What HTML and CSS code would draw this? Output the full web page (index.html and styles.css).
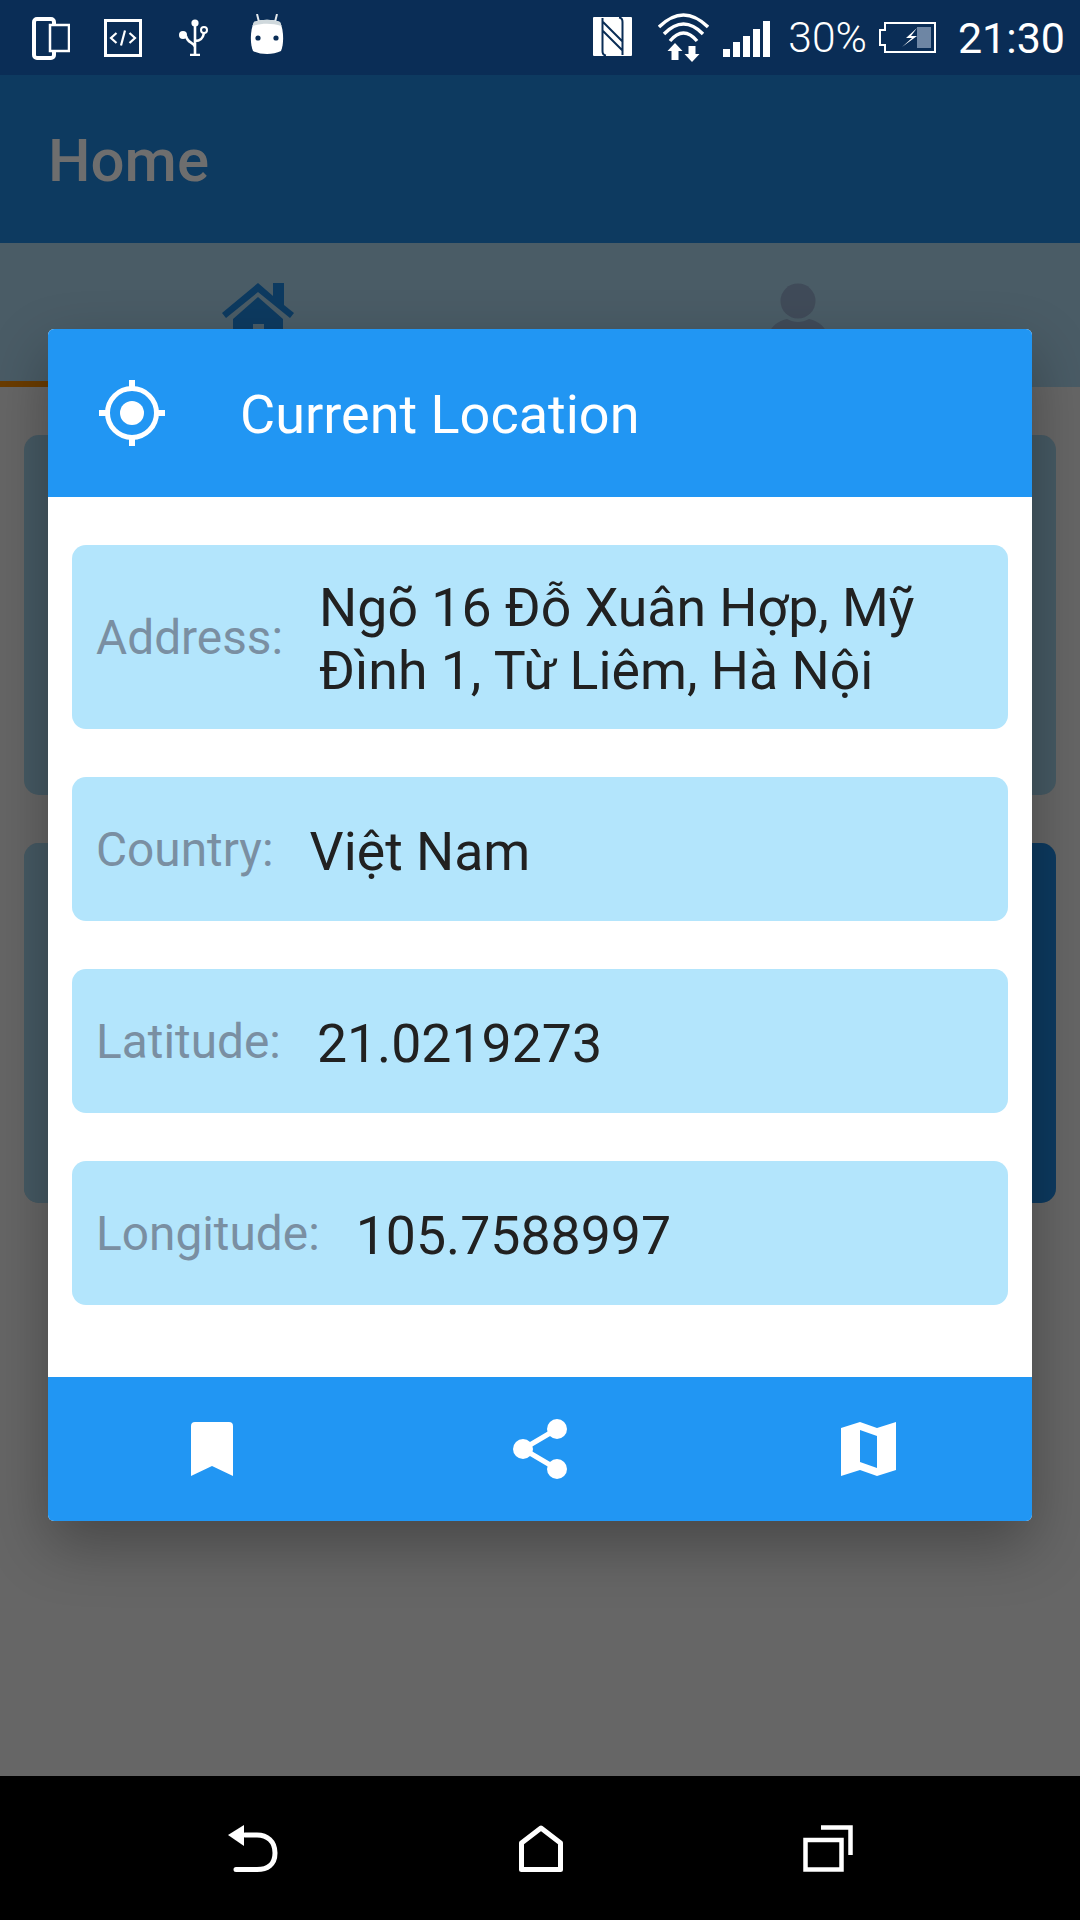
FILE: index.html
```html
<!DOCTYPE html>
<html lang="vi">
<head>
<meta charset="utf-8">
<title>Home</title>
<link rel="stylesheet" href="styles.css">
</head>
<body>
<div class="screen">
  <header class="status">
    <div class="status-left">
      <svg class="ic i-phone" width="38" height="43" viewBox="0 0 38 43"><rect x="2" y="2" width="20" height="39" rx="3" fill="none" stroke="#fff" stroke-width="4"/><rect x="18" y="8" width="19" height="26" fill="#0a2d56" stroke="#fff" stroke-width="2.500"/></svg>
      <svg class="ic i-code" width="38" height="38" viewBox="0 0 38 38"><rect x="1.500" y="1.500" width="35" height="35" fill="none" stroke="#fff" stroke-width="3"/><path d="M12.500 14l-5.500 5 5.500 5M25.500 14l5.500 5-5.500 5M21 11.500l-4 15" fill="none" stroke="#fff" stroke-width="2.200"/></svg>
      <svg class="ic i-usb" width="30" height="37" viewBox="0 0 30 37"><path d="M16 4v32M11 36h10M16 28c-1-5-8-4-9-11M16 22c6 0 8-3 9-8" fill="none" stroke="#fff" stroke-width="2.600"/><circle cx="16" cy="4" r="3.600" fill="#fff"/><circle cx="4" cy="16" r="4" fill="#fff"/><circle cx="25" cy="11" r="3" fill="none" stroke="#fff" stroke-width="2"/></svg>
      <svg class="ic i-droid" width="34" height="41" viewBox="0 0 34 41"><path d="M7 0l2 8M27 0l-2 8" stroke="#e3e8ec" stroke-width="2"/><path d="M4 8C12 5 22 5 30 8 34 16 34 30 31 37 23 41 11 41 3 37 0 30 0 16 4 8z" fill="#fff"/><path d="M4 8C12 5 22 5 30 8L31.500 12C22 9 12 9 2.500 12z" fill="#cfd8dc"/><circle cx="8" cy="24" r="2.600" fill="#0a2d56"/><circle cx="26" cy="24" r="2.600" fill="#0a2d56"/></svg>
    </div>
    <div class="status-right">
      <svg class="ic i-nfc" width="39" height="39" viewBox="0 0 39 39"><rect width="39" height="39" rx="1" fill="#fff"/><path d="M9.500 1V34Q9.500 38 13 38.500M29.500 38V5Q29.500 1 26 .5M10 5L30 25M10 14L30 34" fill="none" stroke="#0a2d56" stroke-width="2"/></svg>
      <svg class="ic i-wifi" width="51" height="49" viewBox="0 0 51 49"><path d="M1 14Q25.500-10 50 14M6 21Q25.500 1 45 21M12 28Q25.500 12 39 28" fill="none" stroke="#fff" stroke-width="3.400"/><path d="M17 30l-7.500 8H13.500v9h7v-9h4zM34 49l7.500-8H37.500v-8h-7v8h-4z" fill="#fff"/></svg>
      <div class="signal"><i class="b1"></i><i class="b2"></i><i class="b3"></i><i class="b4"></i><i class="b5"></i></div>
      <span class="pct">30%</span>
      <svg class="ic i-batt" width="57" height="31" viewBox="0 0 57 31"><path d="M6 1h50v29H6v-7H1V8h5z" fill="none" stroke="#fff" stroke-width="2"/><rect x="38" y="5" width="14" height="21" fill="#6e86a4"/><path d="M38 6L27 16h6l-10 9 15-11h-6l6-8z" fill="#fff"/></svg>
      <span class="clock">21:30</span>
    </div>
  </header>

  <div class="appbar"><span class="app-title">Home</span></div>
  <div class="tabs">
    <div class="tab tab-on">
      <svg width="72" height="56" viewBox="0 0 72 56"><path d="M0 30L36 0l15 13V0h11v22l10 8-4 5L36 9 4 35z" fill="#0d3a60"/><path fill-rule="evenodd" d="M11 36L36 14l25 22v20H11zM31 41h11v15H31z" fill="#0d3a60"/></svg>
    </div>
    <div class="tab">
      <svg width="56" height="56" viewBox="0 0 56 56"><circle cx="28" cy="18" r="17.500" fill="#404b59"/><path d="M0 48C4 40 12 37 17 36c7 4 15 4 22 0 5 1 13 4 17 12v8H0z" fill="#404b59"/></svg>
    </div>
  </div>
  <main class="back">
    <div class="back-card"></div>
    <div class="back-card split"><div class="half"></div><div class="half half-blue"></div></div>
  </main>

  <nav class="navbar">
    <svg width="52" height="47" viewBox="0 0 52 47"><path d="M18 10H30C40 10 48 16 48 28S40 44.500 30 44.500H9" fill="none" stroke="#fff" stroke-width="5" stroke-linecap="round"/><path d="M17 0v21L1 10z" fill="#fff"/></svg>
    <svg width="44" height="47" viewBox="0 0 44 47"><path d="M22 3L41.500 18V44.500H2.500V18z" fill="none" stroke="#fff" stroke-width="5" stroke-linejoin="round"/></svg>
    <svg width="50" height="47" viewBox="0 0 50 47"><rect x="2.500" y="15" width="36" height="29.500" fill="none" stroke="#fff" stroke-width="4.500"/><path d="M18 2.500H47.500V30" fill="none" stroke="#fff" stroke-width="4.500"/></svg>
  </nav>

  <section class="dialog">
    <div class="dlg-head">
      <svg class="target" width="66" height="66" viewBox="0 0 66 66"><circle cx="33" cy="33" r="24.500" fill="none" stroke="#fff" stroke-width="5"/><circle cx="33" cy="33" r="12" fill="#fff"/><path d="M33 0v10M33 56v10M0 33h10M56 33h10" stroke="#fff" stroke-width="6"/></svg>
      <h1 class="dlg-title">Current Location</h1>
    </div>
    <div class="dlg-body">
      <div class="row"><span class="label">Address:</span><span class="value">Ngõ 16 Đỗ Xuân Hợp, Mỹ Đình 1, Từ Liêm, Hà Nội</span></div>
      <div class="row"><span class="label">Country:</span><span class="value">Việt Nam</span></div>
      <div class="row"><span class="label">Latitude:</span><span class="value">21.0219273</span></div>
      <div class="row"><span class="label">Longitude:</span><span class="value">105.7588997</span></div>
    </div>
    <div class="dlg-foot">
      <div class="act"><svg width="42" height="54" viewBox="0 0 42 54"><path d="M0 4a4 4 0 0 1 4-4h34a4 4 0 0 1 4 4v50L21 44 0 54z" fill="#fff"/></svg></div>
      <div class="act"><svg width="54" height="60" viewBox="0 0 54 60"><path d="M44 10L10 30l34 20" fill="none" stroke="#fff" stroke-width="5"/><circle cx="44" cy="10" r="10" fill="#fff"/><circle cx="10" cy="30" r="10" fill="#fff"/><circle cx="44" cy="50" r="10" fill="#fff"/></svg></div>
      <div class="act"><svg width="55" height="54" viewBox="0 0 55 54"><path fill-rule="evenodd" d="M0 6L19 0l17 6 19-6v48l-19 6-17-6-19 6zM19 8v32l17 6V14z" fill="#fff"/></svg></div>
    </div>
  </section>
</div>
</body>
</html>
```

FILE: styles.css
```css
* { box-sizing: border-box; }
html, body { margin: 0; padding: 0; }
body { width: 1080px; height: 1920px; overflow: hidden; font-family: Roboto, "Noto Sans", sans-serif; background: #666; }
.screen { position: relative; width: 1080px; height: 1920px; display: flex; flex-direction: column; }

.status { height: 75px; background: #0a2d56; display: flex; justify-content: space-between; align-items: center; padding: 0 15px 0 32px; color: #fff; }
.status-left { display: flex; align-items: center; }
.status-right { display: flex; align-items: center; }
.ic { display: block; }
.i-phone { margin-top: 1px; }
.i-code { margin-left: 34px; }
.i-usb { margin-left: 37px; }
.i-droid { margin-left: 41px; margin-top: -6px; }
.i-nfc { margin-right: 26px; margin-top: -2px; }
.i-wifi { margin-right: 14px; margin-top: 0; }
.signal { display: flex; align-items: flex-end; justify-content: space-between; width: 47px; height: 36px; margin-right: 18px; margin-top: 3px; }
.signal i { display: block; width: 7px; background: #fff; }
.signal .b1 { height: 8px; }
.signal .b2 { height: 15px; }
.signal .b3 { height: 21px; }
.signal .b4 { height: 28px; }
.signal .b5 { height: 36px; }
.pct { font-size: 42.5px; font-weight: 300; margin-right: 12px; }
.i-batt { margin-right: 22px; }
.clock { font-size: 43px; font-weight: 400; }

.appbar { height: 168px; background: #0d3a60; display: flex; align-items: center; padding-left: 48px; }
.app-title { font-size: 60px; font-weight: 500; color: #6e6e6e; margin-top: 2px; }

.tabs { height: 144px; background: #4a5c66; display: flex; }
.tab { flex: 1; display: flex; justify-content: center; padding: 40px 25px 0 0; border-bottom: 6px solid #4a5c66; }
.tab-on { border-bottom-color: #6a3c00; }

.back { flex: 1; padding: 48px 24px; display: flex; flex-direction: column; gap: 48px; }
.back-card { height: 360px; border-radius: 15px; background: #465a64; overflow: hidden; }
.split { display: flex; }
.half { flex: 1; background: #465a64; }
.half-blue { background: #0d3a60; }

.navbar { height: 144px; background: #000; display: flex; justify-content: space-between; align-items: center; padding: 0 227px; }

.dialog { position: absolute; left: 48px; top: 329px; width: 984px; height: 1192px; background: #fff; border-radius: 6px; overflow: hidden; display: flex; flex-direction: column; box-shadow: 0 24px 60px rgba(0,0,0,0.3); }
.dlg-head { height: 168px; background: #2196f3; display: flex; align-items: center; padding-left: 51px; gap: 75px; }
.target { display: block; }
.dlg-title { margin: 2px 0 0; color: #fff; font-size: 54px; font-weight: 400; }
.dlg-body { flex: 1; padding: 48px 24px 0; display: flex; flex-direction: column; gap: 48px; background: #fff; }
.row { min-height: 144px; background: #b3e5fc; border-radius: 14px; display: flex; align-items: center; padding: 31px 24px 27px; }
.label { font-size: 47.8px; color: #7a8fa2; margin: -2px 36px 0 0; flex: none; }
.value { font-size: 53.6px; line-height: 63px; color: #212121; }
.dlg-foot { height: 144px; background: #2196f3; display: flex; align-items: center; }
.act { flex: 1; display: flex; justify-content: center; }
```
